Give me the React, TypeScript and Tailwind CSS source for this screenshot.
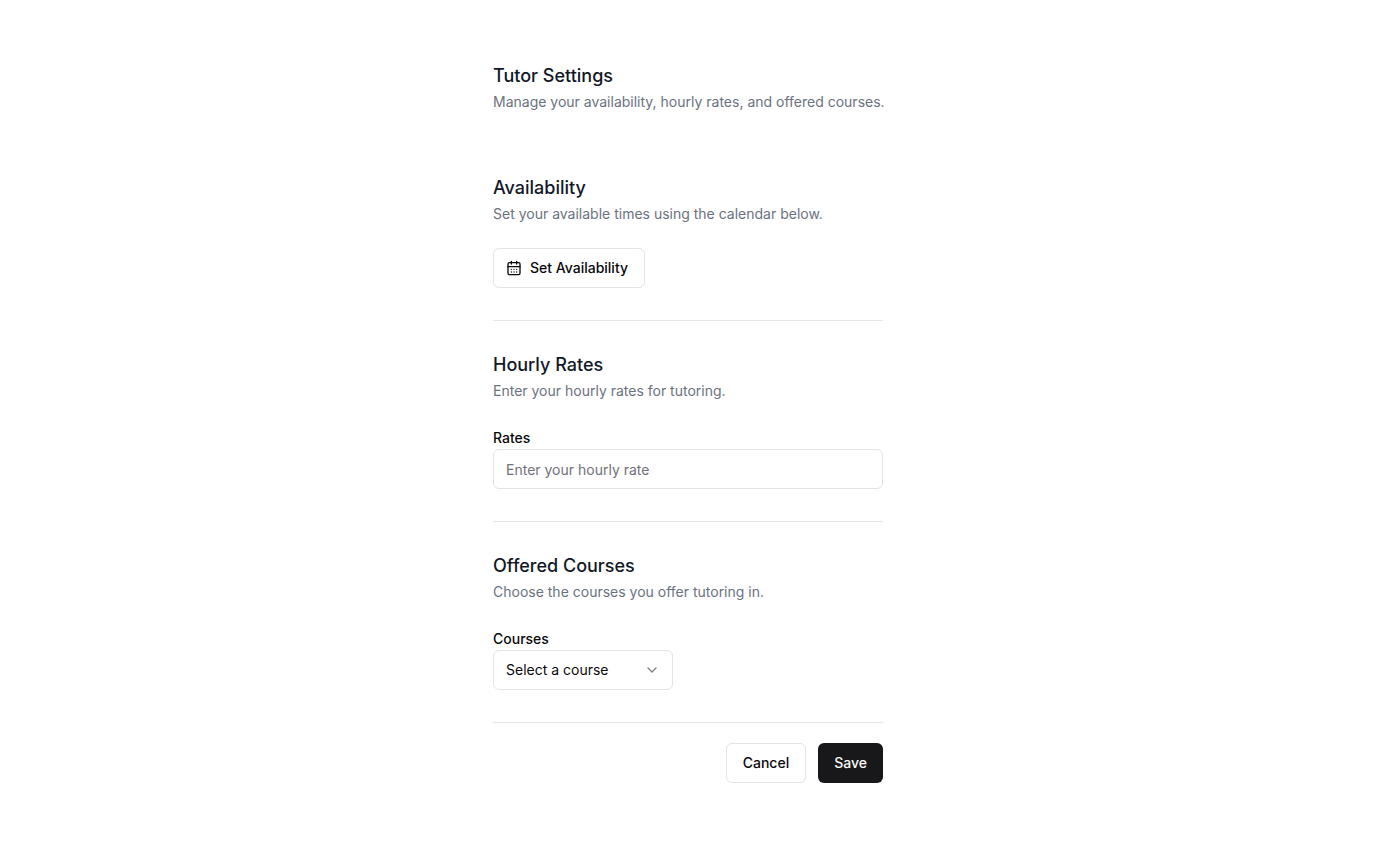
import { useState } from "react";
import type { ReactNode } from "react";

function CalendarIcon() {
  return (
    <svg className="size-4" viewBox="0 0 24 24" fill="none" stroke="currentColor" strokeWidth="2" strokeLinecap="round" strokeLinejoin="round" aria-hidden="true">
      <rect width="18" height="18" x="3" y="4" rx="2" />
      <path d="M16 2v4M8 2v4M3 10h18M8 14h.01M12 14h.01M16 14h.01M8 18h.01M12 18h.01M16 18h.01" />
    </svg>
  );
}

function ChevronIcon() {
  return (
    <svg className="size-4 opacity-50" viewBox="0 0 24 24" fill="none" stroke="currentColor" strokeWidth="2" strokeLinecap="round" strokeLinejoin="round" aria-hidden="true">
      <path d="m6 9 6 6 6-6" />
    </svg>
  );
}

function Heading({ title, children }: { title: string; children: ReactNode }) {
  return (
    <header>
      <h2 className="text-lg leading-6 font-medium text-[#111827]">{title}</h2>
      <p className="mt-1 text-sm text-[#6b7280] sm:whitespace-nowrap">{children}</p>
    </header>
  );
}

const outline = "border border-zinc-200 bg-white text-zinc-950";

export default function App() {
  const [rate, setRate] = useState("");
  const [course, setCourse] = useState("");

  return (
    <main className="flex justify-center px-4 py-16 font-['Inter',sans-serif] text-sm text-zinc-950">
      <form className="w-full max-w-[390px]" onSubmit={(e) => e.preventDefault()}>
        <Heading title="Tutor Settings">Manage your availability, hourly rates, and offered courses.</Heading>
        <div className="mt-8 divide-y divide-gray-200 border-b border-gray-200">
          <section className="py-8">
            <Heading title="Availability">Set your available times using the calendar below.</Heading>
            <button type="button" className={`mt-6 flex h-10 items-center gap-2 rounded-md pr-4 pl-3 font-medium ${outline}`}>
              <CalendarIcon />
              Set Availability
            </button>
          </section>
          <section className="py-8">
            <Heading title="Hourly Rates">Enter your hourly rates for tutoring.</Heading>
            <div className="mt-6">
              <label htmlFor="rates" className="block pt-0.5 leading-[22px] font-medium">Rates</label>
              <input
                id="rates"
                value={rate}
                onChange={(e) => setRate(e.target.value)}
                placeholder="Enter your hourly rate"
                className={`block h-10 w-full rounded-md px-3 placeholder:text-zinc-500 ${outline}`}
              />
            </div>
          </section>
          <section className="py-8">
            <Heading title="Offered Courses">Choose the courses you offer tutoring in.</Heading>
            <div className="mt-6">
              <label htmlFor="courses" className="block pt-0.5 leading-[22px] font-medium">Courses</label>
              <div className="grid w-45 items-center">
                <select
                  id="courses"
                  value={course}
                  onChange={(e) => setCourse(e.target.value)}
                  className={`col-start-1 row-start-1 h-10 w-full appearance-none rounded-md pr-8 pl-3 ${outline}`}
                >
                  <option value="">Select a course</option>
                  <option value="math">Math</option>
                  <option value="science">Science</option>
                  <option value="english">English</option>
                </select>
                <span className="pointer-events-none col-start-1 row-start-1 mr-[13px] justify-self-end">
                  <ChevronIcon />
                </span>
              </div>
            </div>
          </section>
        </div>
        <div className="mt-5 flex justify-end gap-3">
          <button type="button" className={`h-10 rounded-md px-4 font-medium ${outline}`}>Cancel</button>
          <button type="submit" className="h-10 rounded-md bg-zinc-900 px-4 font-medium text-zinc-50">Save</button>
        </div>
      </form>
    </main>
  );
}
